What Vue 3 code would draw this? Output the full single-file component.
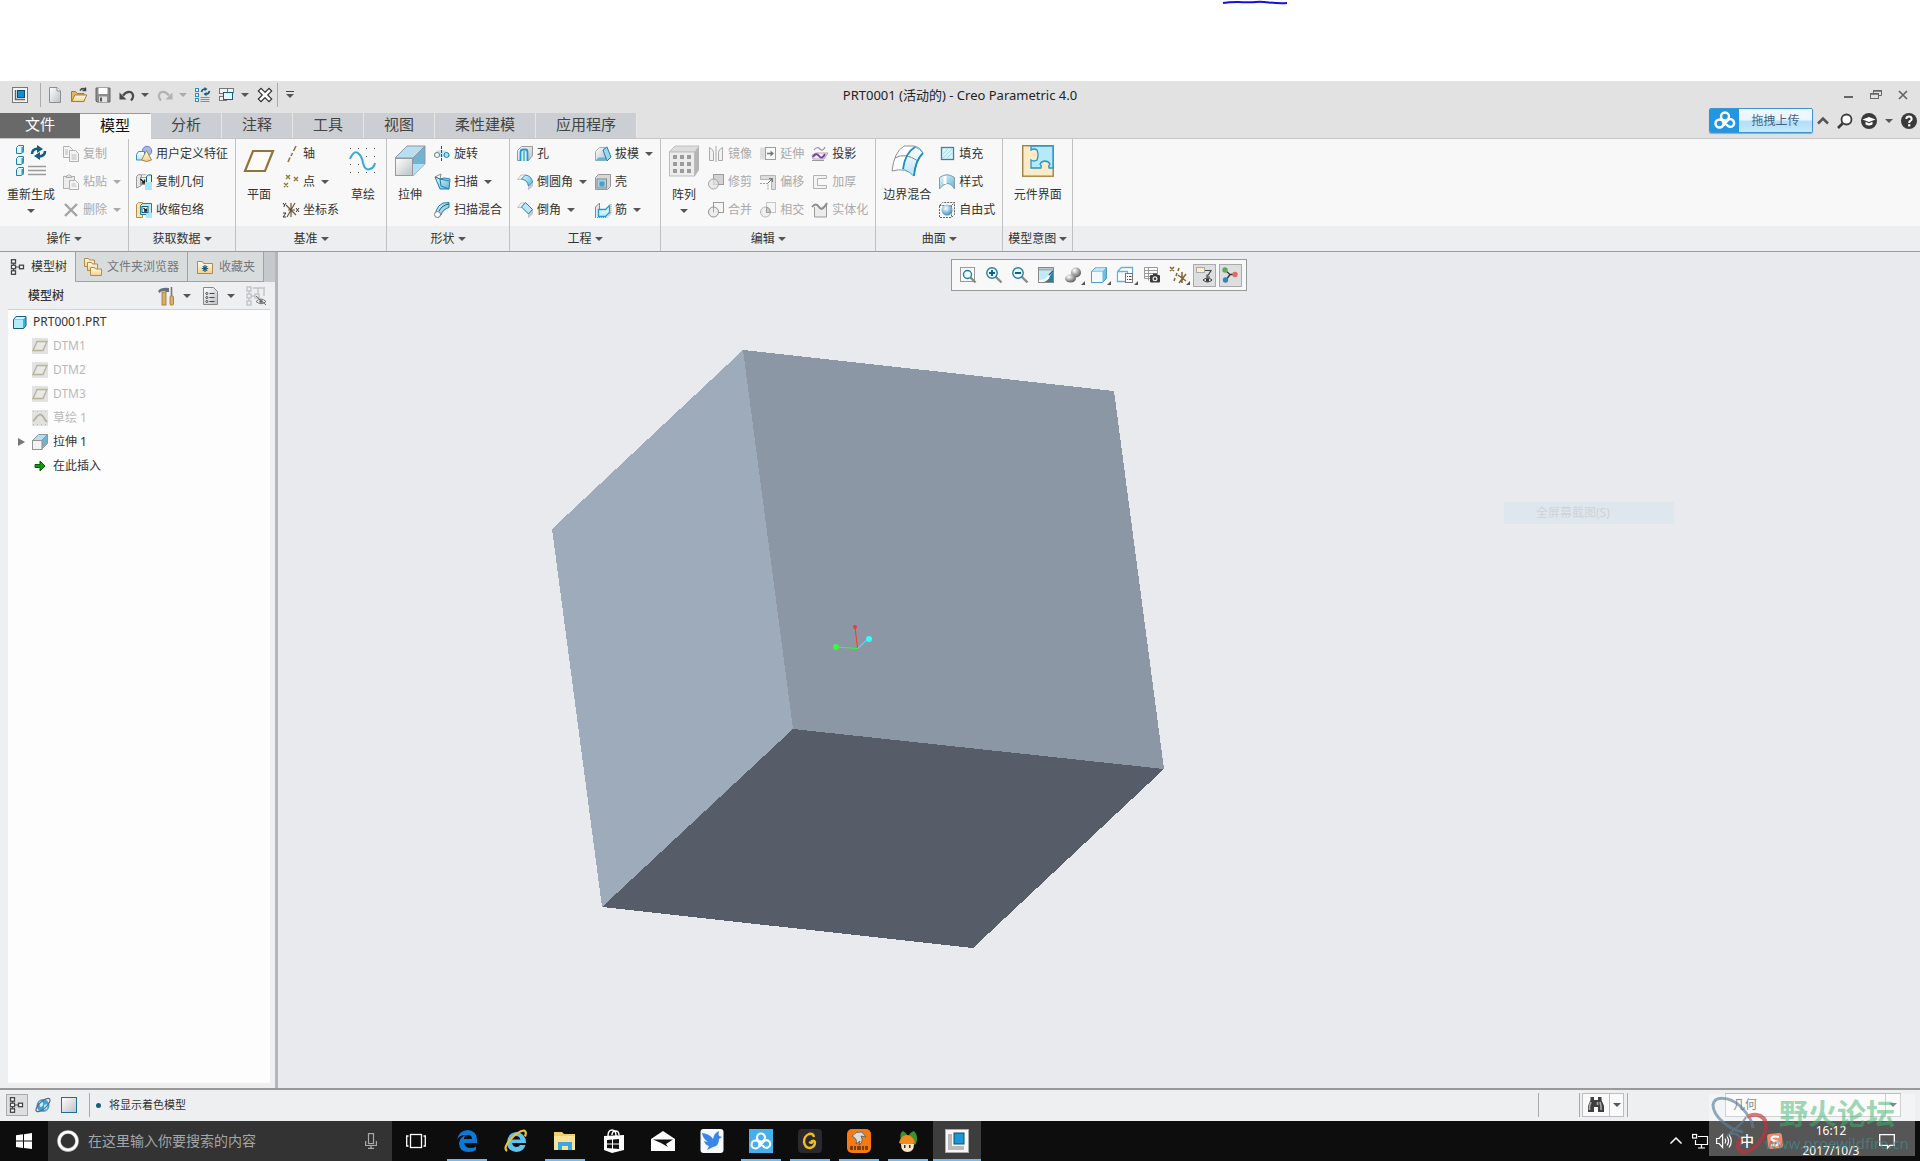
<template>
  <div class="app">
    <!-- Shared gradients, referenced by the icons -->
    <svg class="defs" width="0" height="0" aria-hidden="true">
      <defs>
        <linearGradient id="g-blue" x1="0" y1="0" x2="1" y2="1">
          <stop offset="0" stop-color="#e8f7fd" /><stop offset="1" stop-color="#5db4da" />
        </linearGradient>
        <linearGradient id="g-pale" x1="0" y1="0" x2="0" y2="1">
          <stop offset="0" stop-color="#ffffff" /><stop offset="1" stop-color="#b9e6f8" />
        </linearGradient>
        <linearGradient id="g-grey" x1="0" y1="0" x2="1" y2="1">
          <stop offset="0" stop-color="#ffffff" /><stop offset="1" stop-color="#bcc0c4" />
        </linearGradient>
        <linearGradient id="g-tan" x1="0" y1="0" x2="0" y2="1">
          <stop offset="0" stop-color="#fffdf2" /><stop offset="1" stop-color="#f3cf8b" />
        </linearGradient>
        <radialGradient id="g-ball" cx="0.4" cy="0.35" r="0.7">
          <stop offset="0" stop-color="#ffffff" /><stop offset="1" stop-color="#2a8ab8" />
        </radialGradient>
        <radialGradient id="g-dark" cx="0.35" cy="0.3" r="0.8">
          <stop offset="0" stop-color="#ffffff" /><stop offset="1" stop-color="#4c4c4c" />
        </radialGradient>
      </defs>
    </svg>

    <svg class="scribble" aria-hidden="true">
      <path d="M1223 3 C1236 1 1246 3 1256 2 S1272 4 1287 3" />
    </svg>

    <!-- Title bar -->
    <header class="titlebar">
      <div class="quick">
        <Icon name="app" />
        <span class="sep"></span>
        <template v-for="q in quickTools" :key="q.icon">
          <button class="quick-btn" :aria-label="q.label"><Icon :name="q.icon" /></button>
          <button v-if="q.menu" class="quick-menu" :aria-label="`${q.label} 菜单`">
            <i :class="['caret', { dim: q.dim }]"></i>
          </button>
        </template>
        <span class="sep sep-tight"></span>
        <button class="quick-menu customize" aria-label="自定义"><i class="caret"></i></button>
      </div>
      <h1 class="title">PRT0001 (活动的) - Creo Parametric 4.0</h1>
      <div class="window-btns">
        <button aria-label="最小化"><Icon name="min" :size="12" /></button>
        <button aria-label="还原"><Icon name="restore" :size="12" /></button>
        <button aria-label="关闭"><Icon name="close" :size="12" /></button>
      </div>
    </header>

    <nav class="tabbar">
      <button
        v-for="(t, i) in tabs"
        :key="t"
        :class="['tab', { 'tab-file': i === 0, 'tab-active': i === 1 }]"
      >{{ t }}</button>
      <div class="help">
        <button class="upload">
          <span class="upload-logo"><Icon name="netdisk" :size="22" /></span>
          <span class="upload-text">拖拽上传</span>
        </button>
        <button class="plain" aria-label="折叠"><Icon name="collapse" :size="12" /></button>
        <button class="plain" aria-label="搜索"><Icon name="search" /></button>
        <button class="plain" aria-label="学习"><Icon name="learn" /></button>
        <i class="caret"></i>
        <button class="plain" aria-label="帮助"><Icon name="help" /></button>
      </div>
    </nav>

    <!-- Ribbon -->
    <div class="ribbon">
      <section v-for="g in groups" :key="g.name" class="group">
        <div class="group-body">
          <template v-for="(item, i) in g.items" :key="i">
            <button v-if="item.big" class="big">
              <Icon :name="item.icon" :size="32" />
              <span>{{ item.big }}</span>
              <i v-if="item.menu" class="caret"></i>
            </button>
            <div v-else class="col">
              <button
                v-for="b in item.list"
                :key="b[0]"
                :class="['small', { dim: item.dim && !b[3] }]"
              >
                <Icon :name="b[1]" />
                <span>{{ b[0] }}</span>
                <i v-if="b[2]" :class="['caret', { dim: item.dim }]"></i>
              </button>
            </div>
          </template>
        </div>
        <button class="group-name">{{ g.name }}<i class="caret"></i></button>
      </section>
    </div>

    <main class="main">
      <!-- Navigator -->
      <aside class="navigator">
        <div class="nav-tabs">
          <button class="nav-tab nav-tab-active"><Icon name="tree" /><span>模型树</span></button>
          <button class="nav-tab"><Icon name="folders" :size="18" /><span>文件夹浏览器</span></button>
          <button class="nav-tab"><Icon name="favorite" :size="18" /><span>收藏夹</span></button>
        </div>
        <div class="nav-head">
          <h2>模型树</h2>
          <button class="plain" aria-label="设置"><Icon name="hammer" :size="18" /><i class="caret"></i></button>
          <button class="plain" aria-label="显示"><Icon name="list" :size="18" /><i class="caret"></i></button>
          <button class="plain" aria-label="隐藏"><Icon name="treeHide" :size="20" /></button>
        </div>
        <ul class="tree">
          <li class="root"><Icon name="part" /><span>PRT0001.PRT</span></li>
          <li v-for="n in treeNodes" :key="n.name" :class="['child', { hidden: n.hidden }]">
            <i :class="['expander', { open: n.expandable }]"></i>
            <Icon :name="n.icon" />
            <span>{{ n.name }}</span>
          </li>
        </ul>
      </aside>

      <!-- Graphics window -->
      <section class="viewport">
        <svg class="scene" viewBox="-1 0 1642 836" preserveAspectRatio="xMidYMid meet" shape-rendering="crispEdges">
          <polygon points="464,98 514,477 323,655 273,277" fill="#9eabba" />
          <polygon points="464,98 835,139 885,517 514,477" fill="#8b97a5" />
          <polygon points="514,477 885,517 694,696 323,655" fill="#575d68" />
          <g fill="none" shape-rendering="auto">
            <path d="M578.5 396 L576 375" stroke="#ff3333" />
            <path d="M578.5 396.5 L557 395" stroke="#33ff33" />
            <path d="M578.5 396.5 L590 386" stroke="#33ffff" />
          </g>
          <g shape-rendering="auto">
            <circle cx="576" cy="375" r="2" fill="#ff3333" />
            <circle cx="557" cy="395" r="3" fill="#33ff33" />
            <circle cx="590" cy="387" r="3" fill="#33ffff" />
          </g>
        </svg>
        <div class="view-tools">
          <button
            v-for="v in viewTools"
            :key="v.icon"
            :class="{ pressed: v.on, 'has-menu': v.menu }"
            :aria-label="v.label"
          ><Icon :name="v.icon" /></button>
        </div>
        <div class="ghost-menu">全屏幕截图(S)</div>
      </section>
    </main>

    <!-- Status bar -->
    <footer class="status">
      <button class="status-btn pressed" aria-label="模型树"><Icon name="tree" /></button>
      <button class="status-btn" aria-label="浏览器"><Icon name="globe" /></button>
      <button class="status-btn" aria-label="全屏"><Icon name="screen" /></button>
      <span class="status-sep"></span>
      <span class="bullet"></span>
      <span class="message">将显示着色模型</span>
      <span class="status-sep first-right"></span>
      <span class="status-sep second-right"></span>
      <div class="finder">
        <button aria-label="查找"><Icon name="binoculars" :size="18" /></button>
        <button aria-label="查找选项"><i class="caret"></i></button>
      </div>
      <span class="status-sep"></span>
      <div class="filter">
        <select v-model="filter" aria-label="选择过滤器">
          <option>几何</option>
        </select>
        <span class="filter-arrow"><i class="caret"></i></span>
      </div>
    </footer>

    <!-- Taskbar -->
    <div class="taskbar">
      <button class="start" aria-label="开始"><Icon name="windows" /></button>
      <label class="search">
        <Icon name="cortana" :size="22" />
        <input type="text" placeholder="在这里输入你要搜索的内容" aria-label="搜索" />
        <Icon name="mic" />
      </label>
      <button class="task task-view" aria-label="任务视图"><Icon name="taskview" :size="20" /></button>
      <button
        v-for="a in apps"
        :key="a.icon"
        :class="['task', { running: a.running, current: a.current }]"
        :aria-label="a.label"
      ><Icon :name="a.icon" :size="24" /></button>
      <div class="tray">
        <Icon name="chevron" />
        <Icon name="network" />
        <Icon name="volume" />
        <span class="ime">中</span>
        <Icon name="sogou" />
        <div class="clock"><span>16:12</span><span>2017/10/3</span></div>
        <Icon name="notice" />
      </div>
    </div>

    <div class="watermark">
      <svg class="wm-logo" viewBox="0 0 64 60" width="64" height="60" fill="none" aria-hidden="true">
        <path d="M34 38 C20 36 4 22 4 11 C5 2 20 2 31 12 C39 20 44 27 44 34" stroke="#5c7f9c" stroke-width="3" />
        <path d="M37 23 C34 30 24 36 18 42 M18 42 C26 36 34 42 31 52" stroke="#5c7f9c" stroke-width="2" />
        <path d="M38 23 C48 18 58 22 57 34 C55 46 44 58 34 58 C28 57 28 50 31 44" stroke="#c4313c" stroke-width="4" />
      </svg>
      <div class="wm-text">
        <span class="wm-name">野火论坛</span>
        <span class="wm-url">www.proewildfire.cn</span>
      </div>
    </div>
  </div>
</template>

<script setup>
import { h, ref } from 'vue'

const filter = ref('几何')

const tabs = ['文件', '模型', '分析', '注释', '工具', '视图', '柔性建模', '应用程序']

const quickTools = [
  { icon: 'new',     label: '新建' },
  { icon: 'open',    label: '打开' },
  { icon: 'save',    label: '保存' },
  { icon: 'undo',    label: '撤消', menu: true },
  { icon: 'redo',    label: '重做', menu: true, dim: true },
  { icon: 'regen',   label: '重新生成' },
  { icon: 'windowsList', label: '窗口', menu: true },
  { icon: 'closeWin', label: '关闭' },
]

// Small buttons: [label, icon, has menu, enabled inside a dimmed column]
const groups = [
  { name: '操作', items: [
    { big: '重新生成', icon: 'regenBig', menu: true },
    { dim: true, list: [['复制', 'copy'], ['粘贴', 'paste', true], ['删除', 'remove', true]] },
  ] },
  { name: '获取数据', items: [
    { list: [['用户定义特征', 'udf'], ['复制几何', 'copyGeom'], ['收缩包络', 'shrink']] },
  ] },
  { name: '基准', items: [
    { big: '平面', icon: 'plane' },
    { list: [['轴', 'axis'], ['点', 'point', true], ['坐标系', 'csys']] },
    { big: '草绘', icon: 'sketch' },
  ] },
  { name: '形状', items: [
    { big: '拉伸', icon: 'extrude' },
    { list: [['旋转', 'revolve'], ['扫描', 'sweep', true], ['扫描混合', 'sweptBlend']] },
  ] },
  { name: '工程', items: [
    { list: [['孔', 'hole'], ['倒圆角', 'round', true], ['倒角', 'chamfer', true]] },
    { list: [['拔模', 'draft', true], ['壳', 'shell'], ['筋', 'rib', true]] },
  ] },
  { name: '编辑', items: [
    { big: '阵列', icon: 'pattern', menu: true },
    { dim: true, list: [['镜像', 'mirror'], ['修剪', 'trim'], ['合并', 'merge']] },
    { dim: true, list: [['延伸', 'extend'], ['偏移', 'offset'], ['相交', 'intersect']] },
    { dim: true, list: [['投影', 'project', false, true], ['加厚', 'thicken'], ['实体化', 'solidify']] },
  ] },
  { name: '曲面', items: [
    { big: '边界混合', icon: 'boundary' },
    { list: [['填充', 'fill'], ['样式', 'style'], ['自由式', 'freestyle']] },
  ] },
  { name: '模型意图', items: [
    { big: '元件界面', icon: 'component' },
  ] },
]

const treeNodes = [
  { name: 'DTM1',     icon: 'datum',        hidden: true },
  { name: 'DTM2',     icon: 'datum',        hidden: true },
  { name: 'DTM3',     icon: 'datum',        hidden: true },
  { name: '草绘 1',   icon: 'sketchNode',   hidden: true },
  { name: '拉伸 1',   icon: 'extrudeNode',  expandable: true },
  { name: '在此插入', icon: 'insert' },
]

const viewTools = [
  { icon: 'refit',    label: '重新调整' },
  { icon: 'zoomIn',   label: '放大' },
  { icon: 'zoomOut',  label: '缩小' },
  { icon: 'repaint',  label: '重画' },
  { icon: 'render',   label: '渲染选项', menu: true },
  { icon: 'display',  label: '显示样式', menu: true },
  { icon: 'saved',    label: '已保存方向', menu: true },
  { icon: 'manager',  label: '视图管理器' },
  { icon: 'datumShow', label: '基准显示', menu: true },
  { icon: 'annot',    label: '注释显示', on: true },
  { icon: 'spin',     label: '旋转中心', on: true },
]

const apps = [
  { icon: 'edge',     label: 'Edge', running: true },
  { icon: 'ie',       label: 'Internet Explorer' },
  { icon: 'explorer', label: '文件资源管理器', running: true },
  { icon: 'store',    label: '应用商店' },
  { icon: 'mail',     label: '邮件' },
  { icon: 'bird',     label: '迅雷' },
  { icon: 'disk',     label: '网盘', running: true },
  { icon: 'gapp',     label: 'G', running: true },
  { icon: 'shark',    label: '游戏', running: true },
  { icon: 'mushroom', label: '冒险', running: true },
  { icon: 'creo',     label: 'Creo', running: true, current: true },
]

// ── Icons ─────────────────────────────────────────────────────────────────────
const ring3 = '<circle cx="11" cy="6.500" r="4"/><circle cx="5.500" cy="13.500" r="4"/><path d="M9 10.500l5 5.500a3.800 3.800 0 1 0-.5-5.500l-4 5"/>'

const icons = {
  app: '<rect x=".5" y=".5" width="15" height="15" fill="#f4f4f4" stroke="#777"/><path d="M3.500 3v9.500H13" fill="none" stroke="#666" stroke-width="1.500"/><rect x="5.500" y="3.500" width="7" height="7" fill="#0b8fd6" stroke="#0b4d77"/>',
  new: '<path d="M2.500.5h7.500l3.500 3.500v11.500h-11z" fill="url(#g-grey)" stroke="#8a8f94"/><path d="M10 .5v3.500h3.500" fill="#fff" stroke="#8a8f94"/>',
  open: '<path d="M.5 14.500V4.500h4l1.500 2h7v8z" fill="#e9b65c" stroke="#a57b33"/><path d="M.8 14.500l3-6.500h12l-3 6.500z" fill="url(#g-tan)" stroke="#a57b33"/><path d="M9 3.500q2-3 5-1.500M14.500 .5v3h-3" fill="none" stroke="#444" stroke-width="1.500"/>',
  save: '<path d="M1 1h14v14H2l-1-1z" fill="#8d8d8d" stroke="#666"/><rect x="3.500" y="1" width="9" height="6" fill="#fff"/><rect x="4" y="9.500" width="8" height="5.500" fill="#e4e4e4"/><rect x="5" y="10.500" width="2" height="4" fill="#555"/>',
  undo: '<path d="M4 8.500Q8 3.500 12.500 5.500 16 9 12 13.500" fill="none" stroke="#4a4a4a" stroke-width="2.200"/><path d="M.5 5.500v7h7z" fill="#4a4a4a"/>',
  redo: '<path d="M12 8.500Q8 3.500 3.500 5.500 0 9 4 13.500" fill="none" stroke="#b2b2b2" stroke-width="2.200"/><path d="M15.500 5.500v7h-7z" fill="#b2b2b2"/>',
  regen: '<g fill="#e4f6fd" stroke="#2b90bd"><rect x=".5" y="1.500" width="3" height="3"/><rect x=".5" y="6.500" width="3" height="3"/><rect x=".5" y="11.500" width="3" height="3"/></g><path d="M5.500 10.500h9M5.500 12.500h9M5.500 14.500h9" stroke="#8b8b8b"/><path d="M6.500 5q.5-3 3.500-3M14.500 4q-.5 3-3.500 3" fill="none" stroke="#155e7f" stroke-width="1.600"/><path d="M9.500 0l3 2-3 2.200zM11.500 5l-3 2 3 2.200z" fill="#155e7f"/>',
  windowsList: '<g fill="#f2f2f2" stroke="#777"><rect x=".5" y="1.500" width="8" height="5"/><rect x="8.500" y="1.500" width="6" height="4"/><rect x=".5" y="9.500" width="7" height="4"/></g><rect x="4.500" y="5.500" width="9" height="7" fill="#e6f7fe" stroke="#155e7f"/>',
  closeWin: '<path d="M4 4l8 8M12 4l-8 8" stroke="#333" stroke-width="5" stroke-linecap="square"/><path d="M4 4l8 8M12 4l-8 8" stroke="#fff" stroke-width="2.600" stroke-linecap="square"/>',
  min: '<path d="M1 8h9" stroke="#666" stroke-width="2"/>',
  restore: '<path d="M3.500 4V1.500h8v5H9" fill="none" stroke="#666"/><rect x=".5" y="4.500" width="8" height="5" fill="none" stroke="#666" /><path d="M0 5h9M3 2h9" stroke="#666" stroke-width="1.500"/>',
  close: '<path d="M2 2l8 8M10 2l-8 8" stroke="#666" stroke-width="1.700"/>',
  netdisk: `<g fill="none" stroke="#fff" stroke-width="2.400" transform="translate(0 1)">${ring3}</g>`,
  collapse: '<path d="M1 8.500L6 3.500l5 5" fill="none" stroke="#555" stroke-width="2.500"/>',
  search: '<circle cx="9.500" cy="6.500" r="5" fill="#fff" stroke="#3c3c3c" stroke-width="1.800"/><path d="M5.500 10.500L1 15" stroke="#3c3c3c" stroke-width="2.600"/>',
  learn: '<circle cx="8" cy="8" r="8" fill="#3a3a3a"/><path d="M1.500 6.500L8 4l6.500 2.500L8 9z" fill="#fff"/><path d="M4.500 8.800v2.700q3.500 2 7 0V8.800L8 10.200z" fill="#fff"/>',
  help: '<circle cx="8" cy="8" r="8" fill="#3a3a3a"/><path d="M5.300 6q.2-2.500 2.700-2.500T10.700 6Q10.600 7.300 9 8.200 8.200 8.700 8.200 10" fill="none" stroke="#fff" stroke-width="2"/><rect x="7.100" y="11.200" width="2.200" height="2.200" fill="#fff"/>',

  regenBig: '<g stroke="#1e7fa9" fill="#dff4fc"><path d="M1.500 2.500l2-2h5v6l-2 2h-5zM1.500 13.500l2-2h5v6l-2 2h-5zM1.500 24.500l2-2h5v6l-2 2h-5z"/></g><path d="M7.500 2v6M7.500 13v6M7.500 24v6" stroke="#2e9cc9" stroke-width="2"/><path d="M13 21.500h18M13 25.500h18M13 29.500h18" stroke="#9a9a9a" stroke-width="1.500"/><path d="M17 9q0-5 6-5.500M30 6q0 5-6 5.500" fill="none" stroke="#155e7f" stroke-width="2.600"/><path d="M22 0l6 4-6 4zM25 7l-6 4 6 4z" fill="#155e7f"/>',
  copy: '<g fill="#f4f4f4" stroke="#b0b0b0"><path d="M.5 .5h6l3 3v8h-9z"/><path d="M6.500 4.500h6l3 3v8h-9z"/></g><path d="M2 4h3M2 6h3M2 8h3M8.500 9h5M8.500 11h5M8.500 13h5" stroke="#bbb"/>',
  paste: '<rect x=".5" y="2.500" width="11" height="12" fill="#ededed" stroke="#b0b0b0"/><path d="M3 3.500l1-2h1l1-1 1 1h1l1 2z" fill="#ddd" stroke="#b0b0b0"/><path d="M6.500 6.500h6l3 3v6h-9z" fill="#f6f6f6" stroke="#b0b0b0"/><path d="M8.500 10h4M8.500 12h5" stroke="#bbb"/>',
  remove: '<path d="M2 2l12 12M14 2L2 14" stroke="#a3a3a3" stroke-width="2.400"/>',
  udf: '<circle cx="11" cy="5" r="4.700" fill="#a9b8e8" stroke="#6d7fc0"/><path d="M.5 8.500l2-3h6v6l-2 2.500h-6z" fill="url(#g-pale)" stroke="#3793bf"/><path d="M10.500 4.500l-5 9.500q5 3 10 0z" fill="url(#g-tan)" stroke="#a98543"/>',
  copyGeom: '<path d="M.5 14V2.500l2-2h3v11z" fill="#e3e5e7" stroke="#9a9a9a"/><path d="M2.500.8h8" stroke="#aaa"/><rect x="4.500" y="3.500" width="6" height="7" fill="#f5f5f5" stroke="#999"/><path d="M4.500 5l3.500 3.500M8.500 5.500V9H5.500" fill="none" stroke="#222" stroke-width="1.500"/><path d="M9 8h7v8H9z" fill="#a4e9fd"/><path d="M10.500 8V2.500l2-1.500h3v7" fill="#dff5fc" stroke="#155e7f"/>',
  shrink: '<path d="M.5 15.500V2.500l2-2h4v15z" fill="#fbe3ae" stroke="#b38f4d"/><path d="M4.500 3.500l2-2h9v9l-2 2h-9z" fill="#bdeaf9" stroke="#1e7fa9"/><rect x="6" y="4.500" width="6" height="6" fill="#fff" stroke="#155e7f"/><path d="M7.500 6l3 3M10.500 6.500V9H8" fill="none" stroke="#222" stroke-width="1.300"/><path d="M10 11h6v5h-6z" fill="#a4e9fd"/>',
  plane: '<path d="M10 6h20L22 26H2z" fill="#fdfcf8" stroke="#92753a" stroke-width="2.200"/>',
  axis: '<path d="M13 0l-2.500 5M9.500 7L8 10M7 11.500L5 16" stroke="#92753a" stroke-width="1.600"/>',
  point: '<path d="M3 1l4 4M7 1L3 5M11 3l4 4M15 3l-4 4M1 9l4 4M5 9l-4 4" stroke="#92753a" stroke-width="1.400"/>',
  csys: '<path d="M8 1v14M3 3l10 10M12 1L4 15M5 8h7" stroke="#6b5a35" stroke-width="1.200" fill="none"/><path d="M0 1l1.500 2L3 1M1.500 3L1 5M0 11h3l-3 4h3M13 6l3 4M16 6l-3 4" stroke="#333" fill="none"/>',
  sketch: '<g fill="#555"><path d="M3 3h1v1H3zM11 3h1v1h-1zM19 3h1v1h-1zM27 3h1v1h-1zM3 11h1v1H3zM19 11h1v1h-1zM27 11h1v1h-1zM3 19h1v1H3zM11 19h1v1h-1zM3 27h1v1H3zM11 27h1v1h-1zM19 27h1v1h-1zM27 27h1v1h-1z"/></g><path d="M3 14q4-10 9-5 3 3 4 9 2 8 7 6 4-1 5-6" fill="none" stroke="#36a9dc" stroke-width="2"/>',
  extrude: '<path d="M1 13L13 1h18L19 13z" fill="#b9def0" stroke="#8c979e"/><path d="M19 13L31 1v18L19 31z" fill="#72b3d2" stroke="#8c979e"/><path d="M19 19h12L19 31z" fill="#aee0f4"/><rect x="1.500" y="13.500" width="17" height="17" fill="url(#g-grey)" stroke="#949a9f"/>',
  revolve: '<path d="M0 9q1-5 7-5t9 5v2H0z" fill="#bfe4f2"/><circle cx="3" cy="9" r="2.500" fill="#fff" stroke="#777"/><circle cx="12.500" cy="9" r="2.500" fill="#a9e2f7" stroke="#1e7fa9"/><path d="M7.500 0v16" stroke="#444" stroke-dasharray="3 1"/>',
  sweep: '<path d="M1 3l6-3-1 5z" fill="#fff" stroke="#888"/><path d="M1 3l5 2 4-1 6 1-1 10H6z" fill="url(#g-blue)" stroke="#1e7fa9"/><path d="M6 5l1 7 8 3M6 5l9 2" fill="none" stroke="#1e7fa9"/>',
  sweptBlend: '<path d="M2 9Q4 3 9 1l6-.5v5Q9 7 7 13l-3 2z" fill="url(#g-blue)" stroke="#1e7fa9"/><path d="M5 9Q8 3 15 2" fill="none" stroke="#155e7f"/><circle cx="3.500" cy="12.500" r="3" fill="#fff" stroke="#777"/>',
  hole: '<path d="M.5 4.500l4-4h11v9l-4 5H.5z" fill="url(#g-grey)" stroke="#999"/><path d="M3.500 15V6q0-2.500 3-2.500h2q2 0 2 2.500v9" fill="#d2f0fb" stroke="#1e9ccc" stroke-width="1.800"/><path d="M7 5v10" stroke="#1e7fa9"/>',
  round: '<path d="M.5 5.500L4 1h5l6.500 7v4l-4 3.500V11q-1-5-6-5.500z" fill="url(#g-grey)" stroke="#c2c4c6"/><path d="M4.500 5l4-4q6 1 7 7l-4 4q-1-6-7-7z" fill="url(#g-blue)" stroke="#2a94c4"/>',
  chamfer: '<path d="M.5 5.500L4 1h5l6.500 7v4l-4 3.500V11l-6-5.500z" fill="url(#g-grey)" stroke="#c2c4c6"/><path d="M4.500 5l4-4.500 7 7-4 4.500z" fill="#b6e8fa" stroke="#1e7fa9"/>',
  draft: '<path d="M.5 14.500v-9l4-4h6v13z" fill="url(#g-grey)" stroke="#aaa"/><path d="M.5 14.500h9l3-3h-9z" fill="#5fb4d8"/><path d="M8 4l4-3 4 10-4 4z" fill="#9ad7ef" stroke="#1e7fa9"/>',
  shell: '<path d="M.5 3.500l3-3h12v12l-3 3H.5z" fill="#d5d7d9" stroke="#999"/><rect x="2" y="5" width="9.500" height="9" fill="#9fd6ee" stroke="#8a8a8a"/><path d="M4.500 7.500h5v5h-5z" fill="#4f9dc0"/>',
  rib: '<path d="M.5 15V5l4-4v10h11" fill="#e3e5e7" stroke="#888"/><path d="M3.500 7.500h7l4-4v7l-4 4h-7z" fill="url(#g-pale)" stroke="#1e9ccc" stroke-width="1.300"/><path d="M0 15.500h12l4-4V1" fill="none" stroke="#888" stroke-dasharray="1 1"/>',
  pattern: '<path d="M1 7l6-6h24l-4 6z" fill="#dcdcdc" stroke="#c0c0c0"/><path d="M27 7l4-6v24l-4 6z" fill="#b4b4b4"/><rect x="1.500" y="7" width="25" height="24" fill="#ececec" stroke="#bdbdbd"/><g fill="#9b9b9b"><path d="M5 10h4v4H5zM12 10h4v4h-4zM19 10h4v4h-4zM5 17h4v4H5zM12 17h4v4h-4zM19 17h4v4h-4zM5 24h4v4H5zM12 24h4v4h-4zM19 24h4v4h-4z"/></g>',
  mirror: '<path d="M1.500 1.500q4 2 4 5v8h-4zM14.500 1.500q-4 2-4 5v8h4z" fill="#f2f2f2" stroke="#a9a9a9"/><path d="M8 0v16" stroke="#a9a9a9"/>',
  trim: '<rect x="5.500" y=".5" width="10" height="10" fill="#d2d2d2" stroke="#9b9b9b"/><circle cx="5.500" cy="10" r="5" fill="#e4e4e4" fill-opacity=".7" stroke="#a5a5a5"/>',
  merge: '<rect x="5.500" y=".5" width="10" height="10" fill="#f6f6f6" stroke="#9b9b9b"/><circle cx="5.500" cy="10" r="5" fill="#ededed" stroke="#8f8f8f"/><path d="M5.500 10.500V5" stroke="#aaa"/>',
  extend: '<path d="M0 1.500h5v12H0z" fill="#dedede"/><rect x="5.500" y="1.500" width="10" height="12" fill="#fafafa" stroke="#9d9d9d"/><path d="M7 7.500h5" stroke="#777" stroke-width="1.500"/><path d="M10.500 4.500l3.500 3-3.500 3z" fill="#777"/>',
  offset: '<path d="M.5 1.500h15v14h-4v-10H.5z" fill="#dcdcdc" stroke="#b4b4b4"/><path d="M0 9.500h8V16" stroke="#a0a0a0" stroke-dasharray="2 1" fill="none"/><path d="M8 9l4-4M9 4.500h3.500V8" stroke="#777" fill="none"/>',
  intersect: '<rect x="6.500" y=".5" width="9" height="10" fill="#f6f6f6" stroke="#c6c6c6"/><circle cx="5.500" cy="10" r="5" fill="#efefef" stroke="#b5b5b5"/><path d="M6.500 5q4 1 4 5.500h-4z" fill="#ccc" stroke="#999"/>',
  project: '<path d="M2 4q3-4 6-1t5-2" fill="none" stroke="#999" stroke-width="1.200"/><path d="M0 9l4-2h12l-4 6H1z" fill="#f0f0f0" stroke="#aaa"/><path d="M1 11q3-5 6-1t6-2" fill="none" stroke="#7a3fb0" stroke-width="2"/><path d="M0 14.500h12" stroke="#999"/>',
  thicken: '<path d="M1.500 1.500h13v3h-9v7h9v3h-13z" fill="#f4f4f4" stroke="#b2b2b2"/>',
  solidify: '<path d="M2.500 5v10h12V3" fill="#ececec" stroke="#9b9b9b"/><path d="M0 5q4-5 7 0t8-4" fill="none" stroke="#8c8c8c" stroke-width="2"/>',
  boundary: '<path d="M1 26Q3 7 13 1h10q6 1 9 7-8 8-9 23Q15 22 1 26z" fill="#fff" stroke="#8b8f93"/><path d="M12 24Q14 8 24 2q5 2 8 6-8 8-9 23-5-5-11-7z" fill="url(#g-pale)" stroke="#5fb4d8"/><path d="M4 13q10-6 23 3" fill="none" stroke="#888"/><path d="M12 24Q14 8 24 2M32 8q-8 8-9 23" fill="none" stroke="#1e8dbe" stroke-width="1.800"/>',
  fill: '<rect x="2.500" y="1.500" width="12" height="12" fill="#d9f2fc" stroke="#3686a9" stroke-width="1.300"/><path d="M4 8l5-5M4 12l9-9M8 12l5-5" stroke="#a5d9ec"/>',
  style: '<path d="M.5 15V3.500Q8-2 15.500 3.500V15Q12 9 8 9.500 4 10 .5 15z" fill="url(#g-blue)" stroke="#7d9eae"/><path d="M6 2v8" stroke="#fff" stroke-width="3"/>',
  freestyle: '<path d="M.5 3.500l3-3h12v12l-3 3H.5zM.5 3.500h12v12M12.500 3.500l3-3" fill="none" stroke="#666" stroke-dasharray="2 1"/><circle cx="8" cy="8" r="5.500" fill="url(#g-ball)"/>',
  component: '<rect x=".7" y=".7" width="30.500" height="30.500" fill="#fdeac6" stroke="#a4813f" stroke-width="1.400"/><path d="M9 1h22v22h-4q-1-2 1-4-2-3-5-3t-5 3q2 2 1 4H9v-8q3 2 6 0 2-5 0-10-3-2-6 0z" fill="#b5eafb" stroke="#2a94c4" stroke-width="1.300"/>',

  tree: '<g fill="#fff" stroke="#444" stroke-width="1.300"><rect x="1.500" y=".7" width="4" height="3.500"/><rect x="1.500" y="6.200" width="4" height="3.500"/><rect x="1.500" y="11.800" width="4" height="3.500"/><rect x="9.500" y="6.200" width="4" height="3.500"/></g><path d="M3.500 4v2M3.500 10v2M5.500 8h4" stroke="#444"/>',
  folders: '<g fill="url(#g-tan)" stroke="#b38b45"><path d="M.5 8.500v-8h4l1 1.500h5v6.500z"/><path d="M3.500 12.500v-8h4l1 1.500h5v6.500z"/><path d="M6.500 17.500v-8h4l1 1.500h6v6.500z"/></g>',
  favorite: '<path d="M1.500 15.500v-12h5l1 2h9v10z" fill="url(#g-tan)" stroke="#b38b45"/><path d="M9 7v7M5.800 10.500h6.400M6.800 8.200l4.400 4.600M11.200 8.200l-4.400 4.600" stroke="#155e7f" stroke-width="1.200"/>',
  hammer: '<path d="M0 4q3-4 11-3v4H8l-1-1H5Q3 4 1.500 6z" fill="#667080"/><rect x="4" y="5" width="4" height="13" fill="#d9b06a" stroke="#9b7636" stroke-width=".8"/><path d="M13.500 0v9" stroke="#777" stroke-width="1.600"/><rect x="12" y="9" width="3.500" height="9" rx="1" fill="#d9b06a" stroke="#9b7636" stroke-width=".8"/>',
  list: '<path d="M1.500.5h10l4 4v13h-14z" fill="url(#g-grey)" stroke="#888"/><path d="M7.500 6.500h5M7.500 10.500h5M7.500 14.500h5" stroke="#444"/><g fill="#fff" stroke="#444"><circle cx="4.800" cy="6.500" r="1"/><circle cx="4.800" cy="10.500" r="1"/><circle cx="4.800" cy="14.500" r="1"/></g>',
  treeHide: '<g fill="none" stroke="#c2c4c6" stroke-width="1.400"><rect x="1" y="1" width="4" height="4"/><rect x="1" y="8" width="4" height="4"/><rect x="1" y="15" width="4" height="4"/><rect x="9" y="8" width="4" height="4"/><path d="M3 5v3M3 12v3M5 10h4M7 2h12M12 2v5M18 2v8"/></g><path d="M10 15.500q5-5 10 0-5 4.500-10 0z" fill="#eee" stroke="#777"/><circle cx="15" cy="15.500" r="1.800" fill="#777"/><path d="M10 10l10 9" stroke="#666"/>',
  part: '<path d="M1.500 5.500l2.500-3h10v9l-2.500 3h-10z" fill="#3fb2dd" stroke="#155e7f"/><path d="M2 5.500h9V14H2z" fill="#b2ecfb"/><path d="M2.500 5l2-2h9L11.500 5z" fill="#d9f6fd"/>',
  datum: '<rect width="16" height="16" fill="#e2e2e2"/><path d="M5 3.500h10L11 12.500H1z" fill="#e9e9e4" stroke="#b6b49c" stroke-width="1.400"/>',
  sketchNode: '<rect width="16" height="16" fill="#e2e2e2"/><path d="M1 1h1v1H1zM5 1h1v1H5zM9 1h1v1H9zM13 1h1v1h-1zM1 14h1v1H1zM5 14h1v1H5zM9 14h1v1H9zM13 14h1v1h-1z" fill="#bbb"/><path d="M1 11q2-1 3-3.500Q8 2 11.500 7q1 3 3.500 5" fill="none" stroke="#b6b49c" stroke-width="2"/>',
  extrudeNode: '<path d="M.5 6.500l6-6h9l-5 6z" fill="#b9def0" stroke="#8c979e"/><path d="M10 6l5.500-5.500v9L10 15z" fill="#72b3d2" stroke="#8c979e"/><rect x=".5" y="6.500" width="9.500" height="9" fill="#f2f2f2" stroke="#8f959a"/>',
  insert: '<path d="M3 6.500h5V3l5 5-5 5V9.500H3z" fill="#0b9a0b" stroke="#0a5a0a"/>',

  refit: '<rect x=".5" y=".5" width="14" height="14" fill="#fafafa" stroke="#9a9a9a"/><path d="M10.500 10.500l5 5" stroke="#8a8a8a" stroke-width="2.400"/><circle cx="7.500" cy="7.500" r="4" fill="#eefaff" stroke="#1e7fa9" stroke-width="1.400"/>',
  zoomIn: '<path d="M9.500 9.500l6 6" stroke="#8a8a8a" stroke-width="2.400"/><circle cx="6" cy="6" r="5.200" fill="#eefaff" stroke="#1e7fa9" stroke-width="1.400"/><path d="M3 6h6M6 3v6" stroke="#155e7f" stroke-width="2"/>',
  zoomOut: '<path d="M9.500 9.500l6 6" stroke="#8a8a8a" stroke-width="2.400"/><circle cx="6" cy="6" r="5.200" fill="#eefaff" stroke="#1e7fa9" stroke-width="1.400"/><path d="M3 6h6" stroke="#155e7f" stroke-width="2"/>',
  repaint: '<rect x=".5" y=".5" width="15" height="15" fill="#c2e9f8" stroke="#888"/><path d="M1 2.500h14" stroke="#aaa" stroke-width="2"/><path d="M15 5v10H4q5-2 7-6z" fill="#2b7c9f"/><path d="M1 15h5q5-2 6-6l3-4-5 4q-2 4-9 4z" fill="#fff"/><path d="M15 4l-4 4" stroke="#155e7f" stroke-width="1.500"/>',
  render: '<circle cx="11" cy="5.500" r="5" fill="url(#g-dark)"/><ellipse cx="5.500" cy="11.500" rx="5.500" ry="4" fill="url(#g-dark)"/>',
  display: '<path d="M.5 4.500l4-4h11v11l-4 4H.5z" fill="#6fbcdd" stroke="#4a9cc0"/><path d="M1 5h10.500v10H1z" fill="#f1fbff"/><path d="M1 4.500l4-4h10l-3.500 4z" fill="#b9e4f5"/>',
  saved: '<path d="M.5 4.500l4-4h11v7M.5 4.500h10v3M.5 4.500v10h8" fill="#fff" stroke="#5fb4d8" stroke-width="1.300"/><rect x="8.500" y="6.500" width="7" height="9" fill="#fafafa" stroke="#777"/><path d="M10 9.500h1M12 9.500h2.500M10 12.500h1M12 12.500h2.500" stroke="#444"/>',
  manager: '<path d="M.5 .5h13v11h-13zM.5 3.500h13M.5 6.500h13M.5 9.500h8M4.500 .5v13" fill="#fafafa" stroke="#999"/><rect x="6" y="8" width="10" height="7.500" rx="1" fill="#3a3a3a"/><rect x="9" y="6.500" width="4" height="2" fill="#3a3a3a"/><circle cx="11" cy="11.800" r="2.500" fill="#eee"/><circle cx="11" cy="11.800" r="1.300" fill="#3a3a3a"/>',
  datumShow: '<path d="M0 0l4 4M4 0L0 4M9 1L8 4M7 6l-1 3M5 11l-1 3M12 5v11M8 8l8 6M16 7l-7 9" stroke="#80652f" stroke-width="1.500"/>',
  annot: '<rect x=".5" y=".5" width="8" height="5" fill="#fdeec4" stroke="#aaa"/><path d="M9 3.500h6l-3 5M11 7.500v2.500h3" fill="none" stroke="#444" stroke-width="1.200"/><path d="M7 13q4.500-4 9 0-4.500 4-9 0z" fill="#fff" stroke="#333"/><circle cx="11.500" cy="13" r="1.800" fill="#333"/>',
  spin: '<path d="M3 3l5 4.500L4 13M8 7.500h5" fill="none" stroke="#333" stroke-width="1.300"/><circle cx="3" cy="3" r="2.700" fill="#5fa65a"/><circle cx="13" cy="7.500" r="2.700" fill="#e06a6a"/><circle cx="3.500" cy="13" r="2.700" fill="#3b82b8"/>',

  globe: '<circle cx="8" cy="8.500" r="6.500" fill="#3aa6d8"/><path d="M4 5q3-2 4 1t-3 4zM9 8l4-1-1 5-3 1z" fill="#c6edfb"/><ellipse cx="8" cy="8" rx="9" ry="3.500" transform="rotate(-42 8 8)" fill="none" stroke="#667" stroke-width="1.200"/>',
  screen: '<rect x=".5" y=".5" width="15" height="15" fill="url(#g-grey)" stroke="#1e6f93"/>',
  binoculars: '<path d="M3.500 1h3.500v3h4V1h3.500v3l2.500 6v6h-6v-5H7v5H1v-6l2.500-6z" fill="#3f3f3f"/><path d="M4 6l-1.500 4v4M10.500 6v3M13 6l1 4v4" fill="none" stroke="#aaa" stroke-width="1.600"/>',

  windows: '<path d="M0 2.300L7 1.300V7.600H0zM8 1.200L16 0v7.600H8zM0 8.600h7v6.300L0 13.900zM8 8.600h8V16L8 15z" fill="#fff"/>',
  cortana: '<circle cx="11" cy="11" r="9" fill="none" stroke="#bdbdbd" stroke-width="3.600"/><circle cx="11" cy="11" r="9" fill="none" stroke="#fff" stroke-width="2.400"/>',
  mic: '<g fill="none" stroke="#a8a8a8" stroke-width="1.200"><rect x="5.500" y=".6" width="5" height="10"/><path d="M2.600 8v4.500h10.800V8M8 12.500v3M5 15.400h6"/></g>',
  taskview: '<g fill="none" stroke="#fff" stroke-width="1.300"><rect x="4.500" y="3.500" width="11" height="13"/><path d="M2.500 5H.7v10h1.800M17.500 5h1.800v10h-1.800"/></g>',
  edge: '<path d="M2 11Q4 1 13 1q9 1 9 10v3H9q1 5 7 5 3 0 5-1.500V21q-3 2-7 2-10 0-10-9 1-6 7-8-7 0-9 5zM9 10h8q0-4-4-4T9 10z" fill="#0a79d8"/>',
  ie: '<path d="M12 3q10 1 10 11H8q1 4 4.500 4 2.500 0 3.500-2h5.500q-2 7-9.500 7-9-1-9-10 1-9 9-10zM8 10.500h8.500Q15.500 7 12 7t-4 3.500z" fill="#5cc5f0"/><path d="M3 22q-4-3 3-11Q14 2 20 1.500q3 1 1 6" fill="none" stroke="#f1c232" stroke-width="2.200"/>',
  explorer: '<path d="M1 3h8l2 2h11v16H1z" fill="#f5ce63"/><path d="M1 7h21v14H1z" fill="#fbe39a"/><path d="M5 13h14v8h-4v-4H9v4H5z" fill="#39a8e0"/>',
  store: '<path d="M2 7l20-1v15l-12 3-8-3z" fill="#fff"/><path d="M6 7q0-6 4-6t4 6M10 6q0-4 3.500-4T17 6" fill="none" stroke="#fff" stroke-width="1.400"/><path d="M5 11l5-.5v4H5zM11 10.500l6-.5v4.500h-6zM5 15.500h5v4L5 19zM11 15.500h6v4.500l-6-.5z" fill="#111"/>',
  mail: '<path d="M0 10L12 2l12 8v12H0z" fill="#fff"/><path d="M2 10.500h20L15 15l2 3-7-4z" fill="#111"/>',
  bird: '<rect x=".5" width="23" height="24" rx="3" fill="#f5f8fd"/><path d="M2 4q8 1 11 6 1-6 6-8-1 3 0 5l3 1-3 2q0 7-6 8l-6 3 2-4q-4-1-5-5l4 1Q3 10 2 4z" fill="#3a86e6"/>',
  disk: `<rect width="24" height="24" fill="#45b0ec"/><g fill="none" stroke="#fff" stroke-width="2.200" transform="translate(1 2)">${ring3}</g>`,
  gapp: '<rect width="24" height="24" rx="4" fill="#2a2a2e"/><path d="M16 8q-1-4-5-3-5 2-5 8 1 6 6 6 5-1 5-6-1-2-3-1 1 3-3 1" fill="none" stroke="#f2bd1d" stroke-width="2.400"/>',
  shark: '<rect width="24" height="24" rx="5" fill="#f57a12"/><path d="M5 7Q9 2 15 3l4 5-5-1q3 6-2 9l1-4-4 3q2-5-4-8z" fill="#d9dcdf" stroke="#555" stroke-width=".8"/><path d="M3 17h3v4H3zM7 17h2v4H7zM10 17h4v4h-4zM15 17h2v4h-2zM18 17h3v4h-3z" fill="#7e3e08"/>',
  mushroom: '<path d="M5 11Q3 4 7 2q4 2 5 6 2-5 6-6 5 5 2 13-4 2-8 0z" fill="#3f8f2f"/><path d="M3 14Q5 6 11 6t8 8q-8 4-16 0z" fill="#f28a1c"/><path d="M5 15h13q0 8-6.500 8T5 15z" fill="#fbe6c4"/><path d="M8 16h1.500v3H8zM13 16h1.500v3H13z" fill="#333"/>',
  creo: '<rect x=".5" y=".5" width="23" height="23" fill="#f7f7f7" stroke="#aaa"/><path d="M5 5v14h14" fill="none" stroke="#b9b9b9" stroke-width="4"/><rect x="9" y="4" width="10" height="11" fill="#1a97d6" stroke="#174a66"/>',
  chevron: '<path d="M2.500 10.500L8 5l5.500 5.500" fill="none" stroke="#fff" stroke-width="1.500"/>',
  network: '<g fill="none" stroke="#fff" stroke-width="1.200"><path d="M6 3.500h9.500v8H3.500V7M9.500 11.500v3M6 15h7"/><rect x=".6" y="1.500" width="4" height="3.500"/></g>',
  volume: '<g fill="none" stroke="#fff" stroke-width="1.200"><path d="M.6 5.500h2.500l3.500-4v13l-3.500-4H.6zM9 5.500q1.500 2.500 0 5M11 3.500q3 4.500 0 9M13 1.500q4.500 6.500 0 13"/></g>',
  sogou: '<rect x=".5" y=".5" width="15" height="15" rx="3" fill="#f0562c" transform="rotate(-6 8 8)"/><path d="M12 4Q5 2.500 4.500 5.500 4.500 7.500 8 8t3.500 2.500Q10.500 13.500 4 11.800" fill="none" stroke="#fff" stroke-width="2.200"/>',
  notice: '<path d="M.7 1.700h14.600v10.600h-4.500L8.500 15v-2.700H.7z" fill="none" stroke="#fff" stroke-width="1.300"/>',
}

const Icon = (props) => {
  const size = props.size || 16
  return h('svg', {
    class: 'icon',
    width: size,
    height: size,
    viewBox: `0 0 ${size} ${size}`,
    'aria-hidden': 'true',
    innerHTML: icons[props.name],
  })
}
Icon.props = ['name', 'size']
</script>

<style>
body {
  margin: 0;
  background: #fff;
}
</style>

<style scoped>
/* ── Base ─────────────────────────────────────────────────────────────────── */
.app {
  position: relative;
  display: flex;
  flex-direction: column;
  min-height: 100vh;
  font: 12px/16px "Noto Sans", "Noto Sans CJK SC", sans-serif;
  color: #333;
}
button {
  margin: 0;
  padding: 0;
  border: 0;
  background: none;
  color: inherit;
  font: inherit;
  white-space: nowrap;
}
.defs { position: absolute; }
.icon { display: block; flex: none; overflow: visible; }
.caret {
  display: block;
  flex: none;
  width: 0;
  border: 4px solid transparent;
  border-top-color: #555;
  border-bottom: 0;
}
.caret.dim { border-top-color: #aaa; }
.plain { display: flex; align-items: center; }

.scribble { display: block; width: 100%; height: 81px; }
.scribble path { fill: none; stroke: #1410e0; stroke-width: 2; }

/* ── Title bar ────────────────────────────────────────────────────────────── */
.titlebar {
  display: grid;
  grid-template-columns: 1fr auto 1fr;
  align-items: center;
  height: 27px;
  background: #e2e2e2;
}
.quick { display: flex; align-items: center; padding-left: 12px; }
.quick-btn { margin-left: 8px; }
.quick-menu { margin-left: 6px; }
.sep { width: 1px; height: 24px; margin-left: 12px; background: #aaa; }
.sep + .quick-btn { margin-left: 6px; }
.sep-tight { margin-left: 4px; }
.customize { margin-left: 8px; border-top: 1px solid #444; padding-top: 2px; }
.title {
  margin: 0;
  font-size: 13px;
  font-weight: 400;
  color: #222;
}
.window-btns { display: flex; justify-content: flex-end; gap: 15px; padding-right: 11px; }

/* ── Tabs ─────────────────────────────────────────────────────────────────── */
.tabbar {
  display: flex;
  align-items: flex-end;
  height: 30px;
  border-bottom: 1px solid #c6c6c6;
  background: #e2e2e2;
}
.tab {
  height: 25px;
  padding: 0 20px 2px;
  border-right: 1px solid #e6e6e6;
  background: #cbcfd3;
  color: #444;
  font-size: 15px;
  line-height: 23px;
}
.tab-file { padding: 0 25px 2px; border: 0; background: #696969; color: #fff; }
.tab-active {
  height: 26px;
  margin-bottom: -1px;
  border-top: 1px solid #999;
  border-right-color: #f8f8f8;
  background: #f8f8f8;
  color: #111;
}
.help {
  display: flex;
  align-items: center;
  align-self: flex-start;
  gap: 8px;
  margin-left: auto;
  padding-right: 3px;
}
.upload {
  display: flex;
  height: 25px;
  margin-right: -4px;
  border: 1px solid #3a94cf;
  border-radius: 2px;
  box-shadow: 0 1px 1px #9ab;
  overflow: hidden;
}
.upload-logo { width: 29px; height: 23px; background: #2196e3; }
.upload-logo .icon { margin: 0 auto; }
.upload-text {
  width: 73px;
  background: linear-gradient(#edf7ff 45%, #b5dcf9 55%, #c5ebff);
  color: #3f6483;
  line-height: 24px;
}

/* ── Ribbon ───────────────────────────────────────────────────────────────── */
.ribbon {
  display: flex;
  height: 112px;
  border-bottom: 1px solid #999b9d;
  background: linear-gradient(#f8f8f8 87px, #eceef0 87px);
}
.group {
  display: flex;
  flex-direction: column;
  border-right: 1px solid #bfc1c3;
}
.group-body {
  display: flex;
  justify-content: center;
  gap: 8px;
  height: 88px;
  padding: 1px 7px 0;
  box-sizing: border-box;
}
.big {
  display: flex;
  flex-direction: column;
  align-items: center;
  min-width: 32px;
  padding-top: 5px;
}
.big span { margin-top: 10px; }
.big .caret { margin-top: 6px; }
.col { display: flex; flex-direction: column; }
.small { display: flex; align-items: center; gap: 4px; height: 28px; }
.small .caret { margin-left: 2px; }
.small.dim { color: #aaa; }
.group-name {
  display: flex;
  align-items: center;
  justify-content: center;
  gap: 3px;
  height: 24px;
  padding: 0 5px;
}

/* ── Navigator ────────────────────────────────────────────────────────────── */
.main { display: flex; flex: 1; }
.navigator {
  display: flex;
  flex-direction: column;
  width: 275px;
  border-right: 3px solid #b4b6b9;
  background: #edeff1;
}
.nav-tabs { display: flex; height: 30px; background: #c6c9cb; }
.nav-tab {
  display: flex;
  align-items: center;
  gap: 5px;
  padding: 0 8px;
  border-left: 1px solid #a0a2a4;
  border-bottom: 1px solid #a0a2a4;
  background: #d9dcdd;
  color: #777;
}
.nav-tab-active { padding-left: 9px; border-color: #edeff1; background: #edeff1; color: #333; }
.nav-tab:last-child { border-right: 1px solid #a0a2a4; }
.nav-head {
  display: flex;
  align-items: center;
  height: 27px;
  padding: 0 9px 0 28px;
}
.nav-head h2 { margin: 0 auto 0 0; font-size: 12px; font-weight: 500; }
.nav-head .plain { gap: 7px; margin-left: 11px; }
.tree {
  flex: 1;
  margin: 0 5px 5px 8px;
  padding: 0;
  border-top: 1px solid #cfd2d4;
  background: #fdfdfd;
  list-style: none;
}
.tree li { display: flex; align-items: center; gap: 5px; height: 24px; }
.root { padding-left: 4px; }
.child { padding-left: 10px; }
.tree li.hidden { color: #b9b9b9; }
.expander { width: 7px; margin-right: 2px; box-sizing: border-box; }
.expander.open {
  border: 4px solid transparent;
  border-left: 7px solid #777;
  border-right: 0;
}

/* ── Graphics window ──────────────────────────────────────────────────────── */
.viewport {
  position: relative;
  display: flex;
  flex: 1;
  flex-direction: column;
  align-items: center;
  background: #e8eaee;
}
.scene { position: absolute; inset: 0; width: 100%; height: 100%; }
.view-tools {
  position: relative;
  display: flex;
  align-items: center;
  justify-content: space-between;
  width: 296px;
  height: 32px;
  margin-top: 7px;
  padding: 0 4px;
  border: 1px solid #999;
  background: #f8f8f8;
  box-sizing: border-box;
}
.view-tools button {
  position: relative;
  display: grid;
  place-content: center;
  width: 23px;
  height: 23px;
  border: 1px solid transparent;
  box-sizing: border-box;
}
.view-tools .pressed { border-color: #aaa; background: #dcdee0; }
.has-menu::after {
  content: '';
  position: absolute;
  right: -2px;
  bottom: 1px;
  border-left: 4px solid transparent;
  border-bottom: 4px solid #555;
}
.ghost-menu {
  position: absolute;
  left: 1226px;
  top: 250px;
  width: 138px;
  padding: 3px 0 3px 32px;
  background: #dfe7ee;
  color: #d0d3d7;
}

/* ── Status bar ───────────────────────────────────────────────────────────── */
.status {
  display: flex;
  align-items: center;
  height: 30px;
  padding: 0 19px 1px 6px;
  border-top: 2px solid #999;
  background: #eeeff1;
}
.status-btn {
  display: grid;
  place-content: center;
  width: 22px;
  height: 22px;
  margin-right: 4px;
  border: 1px solid transparent;
  box-sizing: border-box;
}
.status-btn.pressed { border-color: #aaa; background: #dcdee0; }
.status-sep { width: 1px; height: 24px; margin-left: 3px; background: #aaa; }
.status-btn + .status-sep { margin-left: 5px; }
.bullet { width: 5px; height: 5px; margin: 0 8px 0 6px; border-radius: 50%; background: #155e7f; }
.message { margin-right: auto; font-size: 11px; }
.second-right { margin-left: 40px; }
.finder { display: flex; height: 22px; margin-left: 2px; border: 1px solid #bbbdc0; background: #fafafa; }
.finder button { display: grid; place-content: center; width: 26px; }
.finder button + button { width: 14px; border-left: 1px solid #bbbdc0; }
.filter { position: relative; margin-left: 97px; }
.filter select {
  display: block;
  width: 176px;
  height: 24px;
  padding: 0 24px 0 7px;
  border: 1px solid #bbbdc0;
  border-radius: 0;
  background: #fafafa;
  color: #555;
  font: inherit;
  appearance: none;
}
.filter-arrow {
  position: absolute;
  top: 1px;
  right: 1px;
  display: grid;
  place-content: center;
  width: 14px;
  height: 22px;
  border-left: 1px solid #bbbdc0;
  pointer-events: none;
}

/* ── Taskbar ──────────────────────────────────────────────────────────────── */
.taskbar { display: flex; height: 40px; background: #0d0d0d; color: #fff; }
.start { display: grid; place-content: center; width: 48px; }
.search {
  display: flex;
  align-items: center;
  gap: 9px;
  width: 344px;
  padding: 0 13px 0 9px;
  background: #333;
  box-sizing: border-box;
}
.search input {
  flex: 1;
  min-width: 0;
  padding: 0;
  border: 0;
  outline: 0;
  background: none;
  color: #fff;
  font: inherit;
  font-size: 14px;
}
.search input::placeholder { color: #a5a5a5; opacity: 1; }
.task {
  display: grid;
  place-content: center;
  width: 48px;
  margin-right: 1px;
  background: linear-gradient(transparent, transparent) center bottom / 40px 2px no-repeat;
}
.task-view { margin-right: 3px; }
.running { background-image: linear-gradient(#76b9ed, #76b9ed); }
.current { background-color: #3d3d3d; background-size: 48px 2px; }
.tray {
  display: flex;
  align-items: center;
  gap: 8px;
  margin-left: auto;
  padding-right: 25px;
}
.ime { margin-right: 5px; font-size: 14px; font-weight: 500; }
.clock {
  display: flex;
  flex-direction: column;
  width: 80px;
  line-height: 20px;
  text-align: center;
}

/* ── Watermark ────────────────────────────────────────────────────────────── */
.watermark {
  position: absolute;
  right: 5px;
  bottom: 5px;
  display: flex;
  width: 206px;
  height: 62px;
  background: rgba(255, 255, 255, 0.3);
  pointer-events: none;
}
.wm-logo { flex: none; opacity: 0.65; overflow: visible; }
.wm-text { display: flex; flex-direction: column; }
.wm-name {
  margin-left: 6px;
  color: rgba(60, 180, 110, 0.5);
  font-size: 29px;
  font-weight: 700;
  line-height: 40px;
}
.wm-url { margin-left: -8px; color: rgba(60, 140, 140, 0.7); font-size: 15px; line-height: 18px; }
</style>
